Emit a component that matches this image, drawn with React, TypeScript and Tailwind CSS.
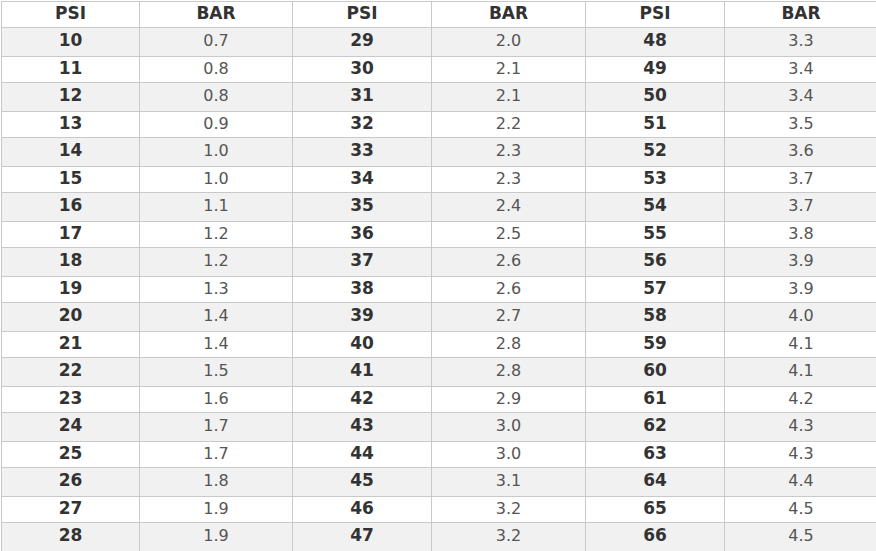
const cols: [number, string][][] = [
  [
    [10, "0.7"], [11, "0.8"], [12, "0.8"], [13, "0.9"], [14, "1.0"], [15, "1.0"], [16, "1.1"],
    [17, "1.2"], [18, "1.2"], [19, "1.3"], [20, "1.4"], [21, "1.4"], [22, "1.5"], [23, "1.6"],
    [24, "1.7"], [25, "1.7"], [26, "1.8"], [27, "1.9"], [28, "1.9"],
  ],
  [
    [29, "2.0"], [30, "2.1"], [31, "2.1"], [32, "2.2"], [33, "2.3"], [34, "2.3"], [35, "2.4"],
    [36, "2.5"], [37, "2.6"], [38, "2.6"], [39, "2.7"], [40, "2.8"], [41, "2.8"], [42, "2.9"],
    [43, "3.0"], [44, "3.0"], [45, "3.1"], [46, "3.2"], [47, "3.2"],
  ],
  [
    [48, "3.3"], [49, "3.4"], [50, "3.4"], [51, "3.5"], [52, "3.6"], [53, "3.7"], [54, "3.7"],
    [55, "3.8"], [56, "3.9"], [57, "3.9"], [58, "4.0"], [59, "4.1"], [60, "4.1"], [61, "4.2"],
    [62, "4.3"], [63, "4.3"], [64, "4.4"], [65, "4.5"], [66, "4.5"],
  ],
];

export default function App() {
  return (
    <div className="min-h-screen bg-white" style={{ fontFamily: '"DejaVu Sans", Verdana, sans-serif' }}>
      <div className="ml-px mt-px grid w-max grid-cols-[137px_152px_138px_153px_138px_152px] gap-px border border-[#c9c9c9] bg-[#c9c9c9]">
        {[0, 1, 2].map((c) => (
          <div key={c} className="contents">
            <div className="flex h-[25px] items-center justify-center bg-white pb-[2px] text-[17px] font-bold text-[#333]">PSI</div>
            <div className="flex h-[25px] items-center justify-center bg-white pb-[2px] text-[17px] font-bold text-[#333]">BAR</div>
          </div>
        ))}
        {cols[0].map((_, r) => {
          const gray = r % 2 === 0;
          const cell = gray ? "h-[28px] bg-[#f1f1f1] pb-[3px]" : "h-[25px] bg-white pb-[2px]";
          return (
            <div key={r} className="contents">
              {cols.map((col, c) => (
                <div key={c} className="contents">
                  <div className={`flex items-center justify-center text-[17px] font-bold text-[#333] ${cell}`}>
                    {col[r][0]}
                  </div>
                  <div className={`flex items-center justify-center text-[16px] text-[#555] ${cell}`}>
                    {col[r][1]}
                  </div>
                </div>
              ))}
            </div>
          );
        })}
      </div>
    </div>
  );
}
